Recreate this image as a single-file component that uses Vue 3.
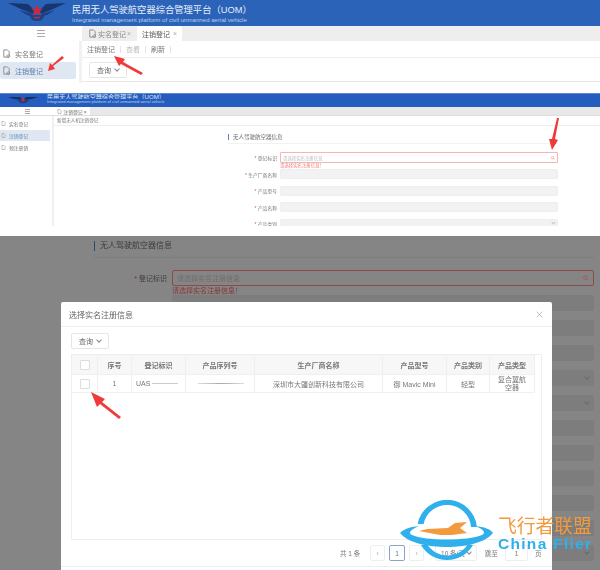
<template>
  <div class="page">
    <!-- first shot: menu -->
    <section class="shot shot-one">
      <header class="brand">
        <svg class="wings" viewBox="0 0 58 24">
          <path d="M0 2 L20 3 L26 9 L25 13 L13 8 Z" fill="#18356f" />
          <path d="M58 2 L38 3 L32 9 L33 13 L45 8 Z" fill="#18356f" />
          <path d="M11 9 L24 13 L25 15 L19 14 Z" fill="#1c3e80" />
          <path d="M47 9 L34 13 L33 15 L39 14 Z" fill="#1c3e80" />
          <path d="M21 14 L37 14 L34 19 Q29 21 24 19 Z" fill="#24407e" />
          <path d="M26 16.5 L32 16.5" stroke="#a0375a" stroke-width="1.5" />
          <path d="M29 3.5 L30.4 7.8 L35 7.8 L31.3 10.5 L32.7 14.8 L29 12.1 L25.3 14.8 L26.7 10.5 L23 7.8 L27.6 7.8 Z" fill="#d8242c" />
        </svg>
        <div class="brand-text">
          <div class="brand-cn">民用无人驾驶航空器综合管理平台（UOM）</div>
          <div class="brand-en">Integrated management platform of civil unmanned aerial vehicle</div>
        </div>
      </header>
      <div class="tabbar">
        <div class="toggle"><span class="burger"></span></div>
        <div class="tab">
          <svg class="doc" viewBox="0 0 10 10"><path d="M2 1h4l2 2v6H2z M7 6.5a1.5 1.5 0 1 0 .01 0" fill="none" stroke="#888" /></svg>
          实名登记 <i>×</i>
        </div>
        <div class="tab tab-on">注销登记 <i>×</i></div>
      </div>
      <div class="work">
        <aside class="side">
          <div v-for="item in menuOne" :key="item" class="side-item" :class="{ on: item === '注销登记' }">
            <svg class="doc" viewBox="0 0 10 10"><path d="M2 1h4l2 2v6H2z M7 6.5a1.5 1.5 0 1 0 .01 0" fill="none" stroke="#888" /></svg>
            {{ item }}
          </div>
        </aside>
        <div class="main">
          <div class="toolbar">
            <span>注销登记</span><b></b><span class="muted">查看</span><b></b><span>刷新</span><b></b>
          </div>
          <div class="query"><button class="btn">查询 <em></em></button></div>
        </div>
      </div>
    </section>

    <!-- second shot: form -->
    <section class="shot shot-two">
      <header class="brand-small">
        <svg class="wings-small" viewBox="0 0 60 14">
          <path d="M0 0 L25 0 L28 6 L12 4 Z" fill="#17305f" />
          <path d="M60 0 L35 0 L32 6 L48 4 Z" fill="#17305f" />
          <path d="M18 5 L29 7 L30 13 L23 11 Z" fill="#1f3f80" />
          <path d="M42 5 L31 7 L30 13 L37 11 Z" fill="#1f3f80" />
          <path d="M30 0 L34 7 L30 9 L26 7 Z" fill="#d8242c" />
        </svg>
        <div>
          <div class="small-cn">民用无人驾驶航空器综合管理平台（UOM）</div>
          <div class="small-en">Integrated management platform of civil unmanned aerial vehicle</div>
        </div>
      </header>
      <div class="tabbar-small">
        <div class="toggle-small"><span class="burger tiny"></span></div>
        <div class="tab-small">
          <svg class="doc tiny-doc" viewBox="0 0 10 10"><path d="M2 1h4l2 2v6H2z" fill="none" stroke="#888" /></svg>
          注销登记 ×
        </div>
      </div>
      <div class="work-small">
        <aside class="side-small">
          <div v-for="item in menuTwo" :key="item" class="small-item" :class="{ on: item === '注销登记' }">
            <svg class="doc tiny-doc" viewBox="0 0 10 10"><path d="M2 1h4l2 2v6H2z" fill="none" stroke="#888" /></svg>
            {{ item }}
          </div>
        </aside>
        <div class="main-small">
          <div class="crumb">新增无人机注销登记</div>
          <div class="form-title"><span>无人驾驶航空器信息</span></div>
          <div class="field first">
            <label><i>*</i> 登记标识</label>
            <div class="input err">
              请选择实名注册信息
              <svg class="lens" viewBox="0 0 10 10"><circle cx="4" cy="4" r="3" fill="none" stroke="#e58a8a" stroke-width="1.4" /><path d="M6 6l3 3" stroke="#e58a8a" stroke-width="1.4" /></svg>
            </div>
          </div>
          <div class="err-text">请选择实名注册信息！</div>
          <div v-for="f in formFields" :key="f" class="field">
            <label><i>*</i> {{ f }}</label>
            <div class="input off"><em v-if="f === '产品类别'" class="caret"></em></div>
          </div>
        </div>
      </div>
    </section>

    <!-- third shot: dialog over dimmed form -->
    <section class="shot shot-three">
      <div class="dim-title"><span>无人驾驶航空器信息</span></div>
      <div class="dim-field">
        <label><i>*</i> 登记标识</label>
        <div class="dim-input">
          请选择实名注册信息
          <svg class="lens big" viewBox="0 0 10 10"><circle cx="4" cy="4" r="3" fill="none" stroke="#a55" stroke-width="1.4" /><path d="M6 6l3 3" stroke="#a55" stroke-width="1.4" /></svg>
        </div>
      </div>
      <div class="dim-err">请选择实名注册信息！</div>
      <div class="dim-rows">
        <div v-for="n in 11" :key="n" class="dim-row"><em v-if="[4, 5, 11].includes(n)" class="caret dark"></em></div>
      </div>

      <div class="dialog">
        <div class="dialog-head">
          <span>选择实名注册信息</span>
          <svg class="close" viewBox="0 0 10 10"><path d="M1 1l8 8M9 1l-8 8" stroke="#aaa" stroke-width="1" /></svg>
        </div>
        <div class="dialog-body">
          <button class="btn">查询 <em></em></button>
          <div class="table-box">
            <div class="grid grid-head">
              <div><span class="check"></span></div>
              <div v-for="c in columns" :key="c">{{ c }}</div>
            </div>
            <div class="grid grid-row">
              <div><span class="check"></span></div>
              <div>1</div>
              <div class="left">UAS<span class="smudge"></span></div>
              <div><span class="smudge long"></span></div>
              <div>深圳市大疆创新科技有限公司</div>
              <div>御 Mavic Mini</div>
              <div>轻型</div>
              <div class="wrap">复合翼航空器</div>
            </div>
          </div>
        </div>
        <div class="pager">
          <span class="total">共 1 条</span>
          <span class="pg">‹</span>
          <span class="pg pg-on">1</span>
          <span class="pg">›</span>
          <span class="pg size">10 条/页 <em></em></span>
          <span class="jump">跳至</span>
          <span class="pg jump-in">1</span>
          <span>页</span>
        </div>
      </div>
    </section>

    <!-- red annotation arrows -->
    <svg class="arrows" viewBox="0 0 600 570">
      <path v-for="(a, i) in arrows" :key="i" :d="a" fill="#f03a3a" />
    </svg>

    <!-- watermark -->
    <div class="mark">
      <svg class="mark-logo" viewBox="0 0 94 68">
        <path d="M17.6 24 A30 30 0 0 1 76.9 27 L71 27 A24 24 0 0 0 23.6 24 Z" fill="#2fb0ec" />
        <path d="M21 45 A30 30 0 0 0 73 45 L68 44 A24 24 0 0 1 27 44 Z" fill="#2fb0ec" />
        <path d="M0 33 C5 28 12 27 19 26 C10 30 8 33 12 35 C25 41 68 41 82 35 C86 33 84 29 75 26 C85 27 90 29 93 33 C85 43 65 47 47 47 C28 47 8 43 0 33 Z" fill="#2fb0ec" />
        <path d="M19 31 L27 29 L48 28 L55 23 L67 22 L60 28 L67 33 L52 35 L40 35 Z" fill="#f39a3c" />
      </svg>
      <div class="mark-text">
        <div class="mark-cn">飞行者联盟</div>
        <div class="mark-en">China Flier</div>
      </div>
    </div>
  </div>
</template>

<script setup>
const menuOne = ["实名登记", "注销登记"];
const menuTwo = ["实名登记", "注销登记", "预注册销"];
const formFields = ["生产厂商名称", "产品型号", "产品名称", "产品类别"];
const columns = ["序号", "登记标识", "产品序列号", "生产厂商名称", "产品型号", "产品类别", "产品类型"];

const arrows = [
  "M64 58 L53 66 L55 69 L48 71 L50 63 L52 65 L62 56 Z",
  "M143 73 L123 62 L125 59 L114 56 L119 66 L121 64 L141 75 Z",
  "M559 118 L555 139 L558 140 L552 150 L549 139 L552 139 L557 118 Z",
  "M121 417 L102 402 L105 399 L91 392 L97 407 L100 404 L119 419 Z",
];
</script>

<style>
html, body { background: #fff; }
</style>

<style scoped>
.page {
  position: relative;
  width: 600px;
  height: 570px;
  overflow: hidden;
  background: #fff;
  font-family: "Liberation Sans", "Noto Sans CJK SC", sans-serif;
  color: #666;
}

.shot { overflow: hidden; filter: blur(0.5px); }

/* first shot */
.shot-one { height: 93px; }

.brand {
  height: 26px;
  background: #2a63b8;
  display: flex;
  align-items: center;
  padding-left: 8px;
}
.wings { width: 58px; height: 24px; margin-right: 6px; }
.brand-cn { font-size: 9.3px; line-height: 12px; color: #e8eefa; white-space: nowrap; }
.brand-en { font-size: 6.1px; line-height: 7px; color: #b9cdee; white-space: nowrap; }

.tabbar { height: 15px; display: flex; background: #eeeeee; }
.toggle { width: 82px; background: #fff; display: flex; align-items: center; justify-content: center; }
.burger { display: block; width: 8px; height: 5px; border-top: 1px solid #aaa; border-bottom: 1px solid #aaa; position: relative; }
.burger::after { content: ""; position: absolute; left: 0; right: 0; top: 2px; height: 1px; background: #aaa; }
.tab { width: 55px; display: flex; align-items: center; justify-content: center; gap: 1px; font-size: 7px; color: #888; }
.tab i { font-style: normal; color: #aaa; }
.tab-on { width: 45px; background: #fff; color: #555; gap: 3px; }
.doc { width: 9px; height: 9px; flex: none; }

.work { display: flex; height: 42px; }
.side { width: 79px; padding-top: 4px; border-right: 3px solid #f1f1f1; }
.side-item { height: 17px; width: 76px; display: flex; align-items: center; gap: 4px; padding-left: 2px; font-size: 7px; color: #777; box-sizing: border-box; }
.side-item.on { background: #dfe8f2; color: #5a7fa8; border-radius: 2px; }

.main { flex: 1; }
.toolbar { height: 17px; display: flex; align-items: center; gap: 5px; padding-left: 5px; font-size: 7px; color: #777; border-bottom: 1px solid #eee; box-sizing: border-box; }
.toolbar b { width: 1px; height: 7px; background: #e4e4e4; }
.toolbar .muted { color: #bbb; }
.query { height: 24px; padding: 4px 0 0 7px; border-bottom: 1px solid #e8e8e8; box-sizing: border-box; }

.btn {
  display: flex;
  align-items: center;
  justify-content: center;
  gap: 4px;
  width: 38px;
  height: 16px;
  padding: 0;
  background: #fff;
  border: 1px solid #e6e6e6;
  border-radius: 2px;
  font: 7px "Liberation Sans", "Noto Sans CJK SC", sans-serif;
  color: #666;
}
.btn em, .size em, .caret {
  display: inline-block;
  width: 3px;
  height: 3px;
  border-right: 1px solid #888;
  border-bottom: 1px solid #888;
  transform: translateY(-1px) rotate(45deg);
}

/* second shot */
.shot-two { height: 143px; }
.brand-small {
  height: 14px;
  background: #245dbd;
  border-top: 1px solid #5c8ad4;
  box-sizing: border-box;
  display: flex;
  padding-left: 8px;
}
.wings-small { width: 30px; height: 13px; margin-right: 9px; }
.small-cn { font-size: 6.1px; line-height: 6px; height: 5px; color: #dfe7f6; white-space: nowrap; overflow: hidden; }
.small-en { font-size: 4.1px; line-height: 6px; color: #bcd0ef; white-space: nowrap; }

.tabbar-small { height: 9px; display: flex; background: #e8e8e8; border-bottom: 1px solid #ddd; box-sizing: border-box; }
.toggle-small { width: 54px; background: #fff; display: flex; align-items: center; justify-content: center; }
.burger.tiny { width: 5px; height: 3px; }
.burger.tiny::after { top: 1px; }
.tab-small { width: 36px; background: #fff; display: flex; align-items: center; justify-content: center; gap: 1px; font-size: 4.8px; color: #666; }
.tiny-doc { width: 5px; height: 5px; }

.work-small { display: flex; height: 110px; overflow: hidden; }
.side-small { width: 50px; padding: 2px 2px 0 0; border-right: 2px solid #f0f0f0; }
.small-item { width: 50px; height: 11px; margin-bottom: 1px; display: flex; align-items: center; gap: 3px; padding-left: 1px; box-sizing: border-box; font-size: 4.8px; color: #777; }
.small-item.on { background: #dfe8f2; color: #6386ab; }

.main-small { flex: 1; }
.crumb { height: 10px; line-height: 10px; padding-left: 3px; font-size: 4.6px; color: #777; border-bottom: 1px solid #eee; box-sizing: border-box; }
.form-title { margin: 0 42px 8px 174px; height: 18px; padding-top: 8px; border-bottom: 1px solid #f2f2f2; box-sizing: border-box; }
.form-title span { display: block; border-left: 1px solid #5a85b8; padding-left: 4px; font-size: 5.5px; line-height: 6px; color: #666; }
.field { display: flex; align-items: center; height: 10px; margin-bottom: 6.5px; margin-left: 171px; }
.field.first { height: 11px; margin-bottom: 0; }
.field label { width: 55px; padding-right: 3px; box-sizing: border-box; text-align: right; font-size: 4.8px; color: #777; white-space: nowrap; }
.field label i { color: #e05050; font-style: normal; }
.input { width: 278px; height: 100%; box-sizing: border-box; border-radius: 1px; font-size: 4.4px; color: #bbb; display: flex; align-items: center; justify-content: space-between; padding: 0 2px; }
.input.err { border: 1px solid #f8b4b4; }
.input.off { background: #f2f2f2; border: 1px solid #eee; justify-content: flex-end; }
.input .caret { width: 2px; height: 2px; border-color: #c4c4c4; }
.lens { width: 4px; height: 4px; }
.err-text { margin: 0 0 0.5px 226px; font-size: 4.4px; line-height: 5.5px; height: 5.5px; color: #ee7b7b; }

/* third shot */
.shot-three { position: relative; height: 334px; background: #858585; }
.dim-title { height: 22px; margin: 0 6px 0 94px; border-bottom: 1px solid #7d7d7d; padding-top: 5px; box-sizing: border-box; }
.dim-title span { display: block; border-left: 1px solid #2d4a6b; padding-left: 5px; font-size: 8px; line-height: 10px; color: #3c3c3c; }
.dim-field { display: flex; align-items: center; margin-top: 12px; }
.dim-field label { width: 172px; text-align: right; padding-right: 5px; box-sizing: border-box; font-size: 7px; color: #3c3c3c; }
.dim-field label i { color: #8e2a2a; font-style: normal; }
.dim-input { width: 422px; height: 16px; border: 1px solid #8c4a4a; border-radius: 2px; box-sizing: border-box; padding: 0 4px; display: flex; align-items: center; justify-content: space-between; font-size: 7px; color: #6e6e6e; }
.lens.big { width: 6px; height: 6px; }
.dim-err { margin-left: 172px; padding-top: 1px; font-size: 7px; line-height: 8px; height: 9px; box-sizing: border-box; color: #8b3434; }
.dim-rows { margin: 0 6px 0 172px; display: flex; flex-direction: column; gap: 9px; }
.dim-row { height: 16px; background: #7d7d7d; border-radius: 2px; display: flex; align-items: center; justify-content: flex-end; padding-right: 5px; }
.caret.dark { border-color: #6a6a6a; }

.dialog {
  position: absolute;
  left: 61px;
  top: 66px;
  width: 491px;
  height: 268px;
  background: #fff;
  border-radius: 2px 2px 0 0;
}
.dialog-head {
  height: 25px;
  padding: 0 8px;
  border-bottom: 1px solid #f0f0f0;
  box-sizing: border-box;
  display: flex;
  align-items: center;
  justify-content: space-between;
  font-size: 8px;
  color: #666;
}
.close { width: 7px; height: 7px; margin-right: 1px; }
.dialog-body { padding: 6px 10px 0; }
.table-box { margin-top: 5px; height: 186px; border: 1px solid #eee; box-sizing: border-box; }
.grid {
  display: grid;
  grid-template-columns: 26px 34px 54px 69px 128px 64px 43px 45px;
  width: 463px;
  font-size: 7px;
  color: #666;
  border-bottom: 1px solid #f0f0f0;
  box-sizing: border-box;
}
.grid > div { display: flex; align-items: center; justify-content: center; border-right: 1px solid #f0f0f0; box-sizing: border-box; text-align: center; }
.grid-head { height: 20px; background: #f7f7f7; font-weight: 700; color: #777; }
.grid-row { height: 18px; color: #777; }
.grid-row .left { justify-content: flex-start; padding-left: 4px; }
.grid-row .wrap { line-height: 8px; padding: 0 5px; }
.check { width: 8px; height: 8px; border: 1px solid #ddd; border-radius: 1px; background: #fff; }
.smudge { display: inline-block; width: 26px; height: 1px; background: #ccc; margin-left: 2px; }
.smudge.long { width: 46px; background: linear-gradient(90deg, #ddd, #aaa 50%, #ddd); }

.pager {
  height: 27px;
  border-bottom: 1px solid #eee;
  box-sizing: border-box;
  display: flex;
  align-items: center;
  padding-left: 279px;
  font-size: 6.5px;
  color: #777;
}
.total { width: 30px; }
.pg { width: 15px; height: 16px; margin-right: 4px; border: 1px solid #eee; border-radius: 2px; box-sizing: border-box; display: flex; align-items: center; justify-content: center; color: #aaa; }
.pg-on { width: 16px; border-color: #86a5c9; color: #4d79ac; }
.size { width: 42px; margin-left: 7px; margin-right: 8px; gap: 2px; color: #777; }
.jump { width: 20px; }
.jump-in { width: 23px; margin-right: 7px; color: #777; }

/* overlays */
.arrows { position: absolute; left: 0; top: 0; width: 600px; height: 570px; pointer-events: none; filter: blur(0.3px); }

.mark { position: absolute; left: 400px; top: 500px; display: flex; }
.mark-logo { width: 94px; height: 68px; flex: none; }
.mark-text { margin: 17px 0 0 4px; }
.mark-cn { font-size: 18.8px; line-height: 19px; height: 20px; color: #f39a3c; white-space: nowrap; }
.mark-en { font-size: 15.5px; line-height: 13px; font-weight: 700; letter-spacing: 1.3px; color: #2fb0ec; white-space: nowrap; }
</style>
